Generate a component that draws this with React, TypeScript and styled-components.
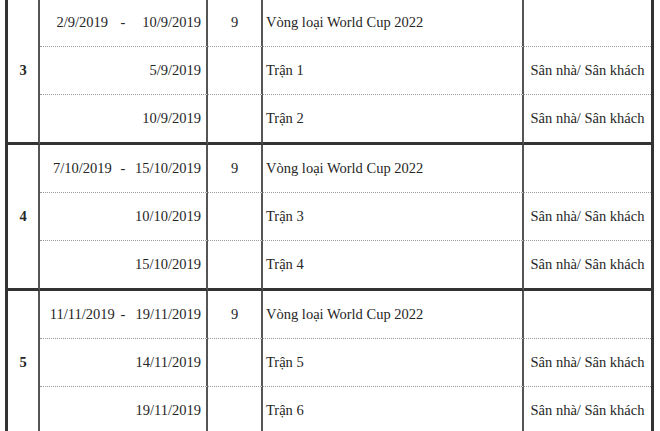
import styled, { createGlobalStyle } from "styled-components";

type Match = { date: string; name: string };
type Round = {
  no: number;
  from: string;
  to: string;
  days: number;
  title: string;
  matches: Match[];
};

const rounds: Round[] = [
  {
    no: 3,
    from: "2/9/2019",
    to: "10/9/2019",
    days: 9,
    title: "Vòng loại World Cup 2022",
    matches: [
      { date: "5/9/2019", name: "Trận 1" },
      { date: "10/9/2019", name: "Trận 2" },
    ],
  },
  {
    no: 4,
    from: "7/10/2019",
    to: "15/10/2019",
    days: 9,
    title: "Vòng loại World Cup 2022",
    matches: [
      { date: "10/10/2019", name: "Trận 3" },
      { date: "15/10/2019", name: "Trận 4" },
    ],
  },
  {
    no: 5,
    from: "11/11/2019",
    to: "19/11/2019",
    days: 9,
    title: "Vòng loại World Cup 2022",
    matches: [
      { date: "14/11/2019", name: "Trận 5" },
      { date: "19/11/2019", name: "Trận 6" },
    ],
  },
];

const VENUE = "Sân nhà/ Sân khách";

export default function App() {
  return (
    <>
      <GlobalStyle />
      <Page>
        <Table>
          <colgroup>
            <col style={{ width: 32 }} />
            <col style={{ width: 168 }} />
            <col style={{ width: 55 }} />
            <col style={{ width: 261 }} />
            <col style={{ width: 127 }} />
          </colgroup>
          <tbody>
            {rounds.map((r) => {
              const rows = r.matches.length + 1;
              return [
                <tr key={`${r.no}-head`}>
                  <NumberCell rowSpan={rows}>{r.no}</NumberCell>
                  <DateCell $last={false}>
                    <Range>
                      <span>{r.from}</span>
                      <Dash>-</Dash>
                      <RangeEnd>{r.to}</RangeEnd>
                    </Range>
                  </DateCell>
                  <DaysCell $last={false}>{r.days}</DaysCell>
                  <NameCell $last={false}>{r.title}</NameCell>
                  <VenueCell $last={false} />
                </tr>,
                ...r.matches.map((m, i) => {
                  const last = i === r.matches.length - 1;
                  return (
                    <tr key={`${r.no}-${m.name}`}>
                      <DateCell $last={last}>
                        <SingleDate>{m.date}</SingleDate>
                      </DateCell>
                      <DaysCell $last={last} />
                      <NameCell $last={last}>{m.name}</NameCell>
                      <VenueCell $last={last}>{VENUE}</VenueCell>
                    </tr>
                  );
                }),
              ];
            })}
          </tbody>
        </Table>
      </Page>
    </>
  );
}

const GlobalStyle = createGlobalStyle`
  html, body {
    margin: 0;
    padding: 0;
    overflow: hidden;
    background: #ffffff;
  }
`;

const Page = styled.div`
  padding-left: 5px;
  font-family: "Liberation Serif", "Times New Roman", serif;
  font-size: 14.5px;
  color: #262626;
`;

const Table = styled.table`
  margin-top: -1px;
  border-collapse: separate;
  border-spacing: 0;
  table-layout: fixed;
  width: 649px;
  border-left: 3px solid #333333;
  border-right: 3px solid #333333;
`;

const Cell = styled.td<{ $last: boolean }>`
  box-sizing: border-box;
  height: ${(p) => (p.$last ? 50 : 48)}px;
  padding: 0;
  vertical-align: middle;
  white-space: nowrap;
  border-right: 2px solid #555555;
  border-bottom: ${(p) =>
    p.$last ? "3px solid #333333" : "1px dotted #9a9a9a"};
`;

const NumberCell = styled.td`
  padding: 0;
  text-align: center;
  vertical-align: middle;
  font-weight: bold;
  border-right: 2px solid #555555;
  border-bottom: 3px solid #333333;
`;

const DateCell = styled(Cell)`
  padding-right: 5px;
`;

const Range = styled.div`
  display: grid;
  grid-template-columns: 1fr auto 1fr;
  align-items: center;
  margin-left: 5px;
  text-align: center;
`;

const Dash = styled.span`
  padding: 0 1px;
`;

const RangeEnd = styled.span`
  text-align: right;
`;

const SingleDate = styled.div`
  text-align: right;
`;

const DaysCell = styled(Cell)`
  text-align: center;
`;

const NameCell = styled(Cell)`
  padding-left: 3px;
`;

const VenueCell = styled(Cell)`
  border-right: none;
  text-align: center;
`;
